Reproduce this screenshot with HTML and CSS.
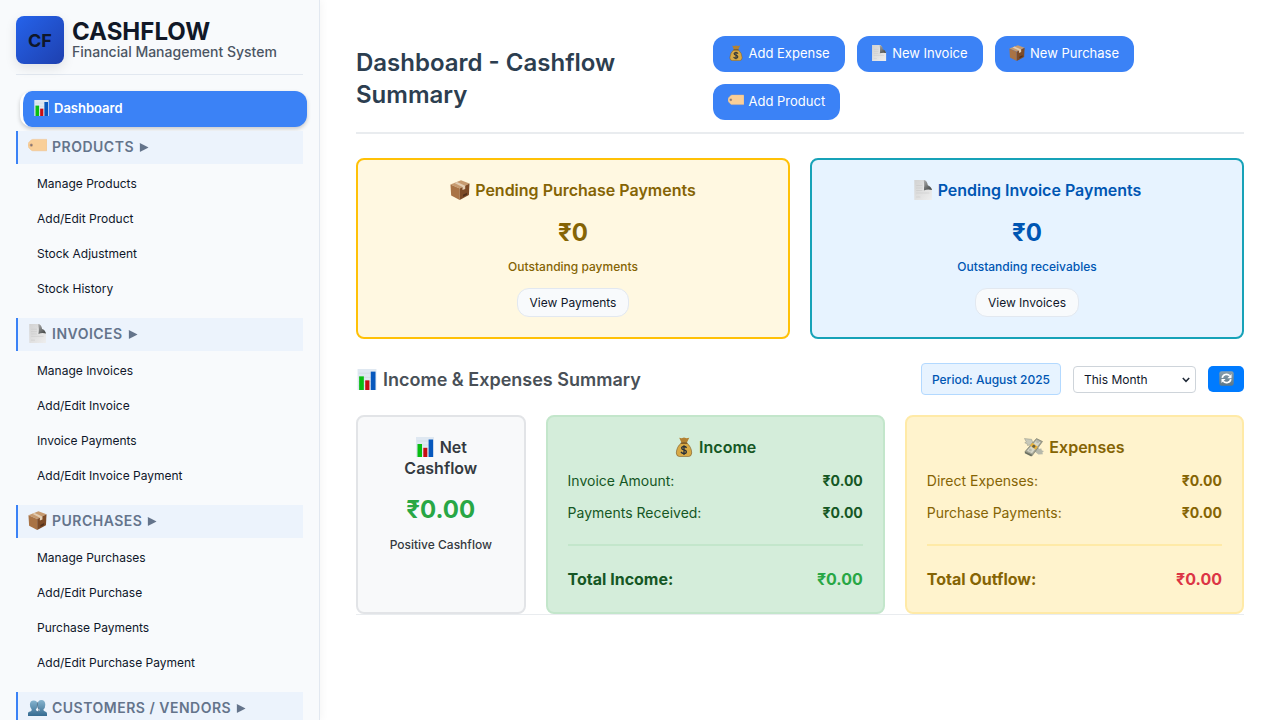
FILE: index.html
```
<!DOCTYPE html>
<html lang="en">
<head>
<meta charset="utf-8">
<title>Cashflow Dashboard</title>
<link rel="stylesheet" href="styles.css">
</head>
<body>
<svg class="defs" width="0" height="0" aria-hidden="true">
  <defs>
    <linearGradient id="gPage" x1="0" y1="0" x2="1" y2="1"><stop offset="0" stop-color="#d2d2d2"/><stop offset="1" stop-color="#eeeeee"/></linearGradient>
    <linearGradient id="gFold" x1="0" y1="0" x2=".7" y2="1"><stop offset="0" stop-color="#b0b0b0"/><stop offset="1" stop-color="#454949"/></linearGradient>
    <linearGradient id="gBlue" x1="0" y1="0" x2="0" y2="1"><stop offset="0" stop-color="#86b4cf"/><stop offset="1" stop-color="#356b91"/></linearGradient>
    <linearGradient id="gSync" x1="0" y1="0" x2="0" y2="1"><stop offset="0" stop-color="#8aa0ae"/><stop offset="1" stop-color="#5c7787"/></linearGradient>
  </defs>
  <symbol id="chart" viewBox="0 0 20 20"><path fill="#dfe8f1" d="M1 0h18v20H1z"/><path stroke="#c3ced9" stroke-width=".4" d="M2 4h16M2 8h16M2 12h16M2 16h16"/><path fill="#09bd12" d="M2.500 7h4.500v13H2.500z"/><path fill="#c80d12" d="M8.300 10.800h4V20h-4z"/><path fill="#0758bd" d="M13.600 2.500h4.500V20h-4.500z"/></symbol>
  <symbol id="tag" viewBox="0 0 20 20"><path fill="#f9cf98" stroke="#edbd83" stroke-width=".5" d="M5 2.500h14.500q.4 0 .4.500v11q0 .5-.5.500H5q-1 0-1.800-.8L.8 11.200Q0 10 0 8.500T.8 5.800l2.400-2.500Q4 2.500 5 2.500z"/><circle cx="3.500" cy="8.500" r="1.700" fill="#b69176"/><circle cx="3.500" cy="8.500" r=".7" fill="#54617c"/></symbol>
  <symbol id="page" viewBox="0 0 20 20"><path fill="url(#gPage)" d="M1.300 0h10.500q2.400 2 2.600 6l4.500 3V20H1.300z"/><path fill="url(#gFold)" d="M10.800 0q3.400.5 4 5.300 3.200.9 4.200 4.800-4-1.200-8.200.3.900-5.400 0-10.400z"/><path fill="#e6e6e6" d="M10.500 2q1 3.500.3 8.400l-1 .3z"/><path stroke="#c4c4c4" stroke-width=".5" d="M3.300 5.500h6M3.300 8h6M3.300 10.500h6M3.300 13h13M3.300 17h4"/></symbol>
  <symbol id="box" viewBox="0 0 20 20"><path fill="#c69a6f" d="M.5 4.500 11 .2l8.500 3.300-9.800 5z"/><path fill="#a97345" d="M.5 4.500 9.700 8.500V20L1.200 15.500z"/><path fill="#7d4b27" d="m9.700 8.500 9.800-5-.6 11.500L9.700 20z"/><path fill="#e3cdb2" d="M4.500 3 7 2l8.200 3.700v3.200L12.500 10V7z"/><path fill="#52301b" d="m13 14.700 4-2v2l-4 2z"/></symbol>
  <symbol id="bag" viewBox="0 0 20 20"><path fill="#b38232" d="m5.200.8 2.500.5L10 .5l2.600.8 2.700-.6-2.500 5H7.500z"/><path fill="#d8aa46" stroke="#795522" stroke-width=".6" d="M7.300 6q2.700-1 5.500 0 4.700 3.800 4.900 10-.3 3.600-3.300 3.600H5.700q-3.200 0-3.400-3.600Q2.700 9.500 7.300 6z"/><path fill="none" stroke="#765020" stroke-width="1.200" d="M6.800 6.200h6.500"/><path fill="none" stroke="#283039" stroke-width="1.300" d="M12.600 10.700Q11.500 9.500 10 9.500c-3.300 0-3 2.900 0 3.400 3.300.6 2.900 3.700 0 3.700-1.600 0-2.600-.9-3-1.700M10 8.300v9.600"/></symbol>
  <symbol id="wings" viewBox="0 0 20 20"><path fill="#c7c8b9" stroke="#84867a" stroke-width=".4" d="m.4 1.500 7.200.8 2 5.200-2.800 2-1-1.500-2.300.5-.5-2L.8 6l1.300-1.500z"/><path fill="#b6b8aa" d="m10 14 3-4 2.700 2 1.500-.8.7 2.300 2.100.6-1.600 1.400.5 1.800-4.500.1z"/><path fill="#a4a596" stroke="#626758" stroke-width=".5" d="m1 14.500 11.500-13 6 3-10.200 14z"/><path fill="#d7d8ca" d="m3 13.700 9.500-10.500 4 2L8 16.200z"/><circle cx="13.600" cy="4.700" r="1.500" fill="#b9bbad"/><circle cx="6.300" cy="13" r="1.500" fill="#b9bbad"/><path fill="#e8b33d" d="m6 8.500 2.400-2.800 5.500 4-2.300 3z"/><circle cx="9.800" cy="9.200" r="1.500" fill="#635f43"/><path fill="#696e61" d="m.8 14.600 7.500 3.500-1 1.400-6.500-3.300z"/></symbol>
  <symbol id="people" viewBox="0 0 20 20"><g fill="url(#gBlue)"><path d="M6 2.500q4 0 4 4.700 0 3.300-1.800 5 .3 1.800 3.300 2.200V19H0v-3.200q.3-1.200 2.200-1.500 1.800-.3 1.700-2.200Q2 10.300 2 7.200q0-4.700 4-4.700z"/><path d="M14 2q4.200 0 4.200 5 0 3.400-2 5.200 0 1.700 1.800 2.100 2 .4 2 2V19H9v-3.200q.3-1.200 2-1.500 1.500-.3 1.300-2.100-2.200-1.900-2.200-5.200 0-5 3.900-5z"/></g><path fill="none" stroke="#33556e" stroke-width=".7" d="M10 4.500q-1 5 1.500 7.500 0 2-1.500 3"/></symbol>
  <symbol id="sync" viewBox="0 0 20 20"><rect x=".4" y=".4" width="19.200" height="19.200" rx="3" fill="url(#gSync)"/><path fill="none" stroke="#fff" stroke-width="2.300" d="M4.300 9.300A5.800 5.800 0 0 1 14.300 6.300M15.700 10.700A5.800 5.800 0 0 1 5.700 13.700"/><path fill="#fff" d="M16.700 4v5.500h-5.500zM3.300 16v-5.500h5.500z"/></symbol>
  <symbol id="arrow" viewBox="0 0 10 10"><path fill="currentColor" d="M.4.600Q.4.200.9.400L9.600 4.600q.5.400 0 .8L.9 9.600Q.4 9.800.4 9.400z"/></symbol>
</svg>
<div class="app">
  <aside class="sidebar">
    <div class="brand">
      <div class="logo">CF</div>
      <div class="brand-copy"><div class="brand-name">CASHFLOW</div><div class="brand-sub">Financial Management System</div></div>
    </div>
    <nav>
      <a class="nav-active"><svg class="ico"><use href="#chart"/></svg>Dashboard</a>
      <section class="group"><h3><svg class="ico"><use href="#tag"/></svg>PRODUCTS<svg class="arrow"><use href="#arrow"/></svg></h3>
        <a>Manage Products</a><a>Add/Edit Product</a><a>Stock Adjustment</a><a>Stock History</a></section>
      <section class="group"><h3><svg class="ico"><use href="#page"/></svg>INVOICES<svg class="arrow"><use href="#arrow"/></svg></h3>
        <a>Manage Invoices</a><a>Add/Edit Invoice</a><a>Invoice Payments</a><a>Add/Edit Invoice Payment</a></section>
      <section class="group"><h3><svg class="ico"><use href="#box"/></svg>PURCHASES<svg class="arrow"><use href="#arrow"/></svg></h3>
        <a>Manage Purchases</a><a>Add/Edit Purchase</a><a>Purchase Payments</a><a>Add/Edit Purchase Payment</a></section>
      <section class="group"><h3><svg class="ico"><use href="#people"/></svg>CUSTOMERS / VENDORS<svg class="arrow"><use href="#arrow"/></svg></h3></section>
    </nav>
  </aside>
  <main class="main">
    <header class="page-head">
      <h1>Dashboard - Cashflow Summary</h1>
      <div class="actions">
        <button class="action"><svg class="ico"><use href="#bag"/></svg>Add Expense</button>
        <button class="action"><svg class="ico"><use href="#page"/></svg>New Invoice</button>
        <button class="action"><svg class="ico"><use href="#box"/></svg>New Purchase</button>
        <button class="action"><svg class="ico"><use href="#tag"/></svg>Add Product</button>
      </div>
    </header>
    <div class="pending">
      <div class="pend-card purchase"><h3><svg class="ico"><use href="#box"/></svg>Pending Purchase Payments</h3><div class="amount">₹0</div><p>Outstanding payments</p><button class="view">View Payments</button></div>
      <div class="pend-card invoice"><h3><svg class="ico"><use href="#page"/></svg>Pending Invoice Payments</h3><div class="amount">₹0</div><p>Outstanding receivables</p><button class="view">View Invoices</button></div>
    </div>
    <div class="summary-head">
      <h2><svg class="ico"><use href="#chart"/></svg>Income &amp; Expenses Summary</h2>
      <div class="filters"><span class="period">Period: August 2025</span><span class="range-wrap"><select class="range"><option>This Month</option></select><svg class="chevron" viewBox="0 0 8 6"><path d="m.8 1 3.200 3.300L7.200 1"/></svg></span><button class="refresh" aria-label="Refresh"><svg><use href="#sync"/></svg></button></div>
    </div>
    <div class="summary">
      <div class="card net"><h3><svg class="ico"><use href="#chart"/></svg>Net Cashflow</h3><div class="amount">₹0.00</div><p>Positive Cashflow</p></div>
      <div class="card income"><h3><svg class="ico"><use href="#bag"/></svg>Income</h3>
        <div class="row"><span>Invoice Amount:</span><b>₹0.00</b></div><div class="row"><span>Payments Received:</span><b>₹0.00</b></div>
        <div class="total"><span>Total Income:</span><span class="value">₹0.00</span></div></div>
      <div class="card expense"><h3><svg class="ico"><use href="#wings"/></svg>Expenses</h3>
        <div class="row"><span>Direct Expenses:</span><b>₹0.00</b></div><div class="row"><span>Purchase Payments:</span><b>₹0.00</b></div>
        <div class="total"><span>Total Outflow:</span><span class="value">₹0.00</span></div></div>
    </div>
  </main>
</div>
</body>
</html>
```
FILE: styles.css
```
* { box-sizing: border-box; }
body { margin: 0; background: #fff; color: #0f172a; font-family: Inter, "Liberation Sans", sans-serif; -webkit-font-smoothing: antialiased; }
h1, h2, h3, p { margin: 0; }
button, select { font-family: inherit; }
.defs { display: block; }
.app { display: flex; height: 720px; overflow: hidden; }
.ico { flex: none; display: inline-block; }

.sidebar { width: 320px; flex: none; padding: 16px; background: #f8fafc; border-right: 1px solid #e2e8f0; box-shadow: 2px 0 8px rgba(0,0,0,.04); overflow: hidden; }
.brand { display: flex; gap: 8px; height: 59px; border-bottom: 1px solid #e2e8f0; }
.logo { width: 48px; height: 48px; flex: none; border-radius: 8px; background: linear-gradient(135deg, #2563eb, #1e40af); color: #0f172a; font-size: 18px; font-weight: 700; line-height: 49px; text-align: center; box-shadow: 0 4px 12px rgba(0,0,0,.1); }
.brand-name { font-size: 24px; font-weight: 700; line-height: 24px; padding-top: 4px; height: 27px; color: #111827; }
.brand-sub { font-size: 14px; font-weight: 500; line-height: 17px; color: #4b5563; }
nav { padding-top: 16px; }
.nav-active { display: flex; align-items: center; width: 287px; height: 36px; margin: 0 0 4px 4px; padding: 0 0 2px 10px; border-left: 3px solid #fff; border-radius: 12px; background: #3b82f6; color: #fff; font-size: 13px; font-weight: 600; box-shadow: 0 2px 4px rgba(0,0,0,.2); }
.nav-active .ico { width: 17px; height: 16px; margin-right: 4px; }
.group { margin-bottom: 12px; }
.group h3 { display: flex; align-items: center; height: 33px; margin-bottom: 2px; padding: 0 0 2px 10px; border-left: 2px solid #3b82f6; background: #ecf3fc; color: #64748b; font-size: 14px; font-weight: 600; letter-spacing: .5px; }
.group h3 .ico { width: 19px; height: 19px; margin: -1px 5px 0 0; }
.arrow { width: 10px; height: 9px; margin: 1px 0 0 5px; overflow: visible; }
.group a { display: block; height: 35px; padding-left: 21px; font-size: 12px; line-height: 36px; }

.main { flex: 1; min-width: 0; padding: 36px; }
.page-head { display: flex; align-items: center; height: 98px; padding-bottom: 12px; border-bottom: 2px solid #e9ecef; }
.page-head h1 { width: 357px; padding: 2px 50px 0 0; flex: none; color: #2c3e50; font-size: 24px; font-weight: 600; line-height: 32px; }
.actions { display: flex; flex-wrap: wrap; gap: 12px; flex: 1; }
.action { display: flex; align-items: center; height: 36px; padding: 0 15px 2px 14.5px; border: 0; border-radius: 12px; background: #3b82f6; color: #fff; font-size: 13px; }
.action .ico { width: 16px; height: 16px; margin-right: 5px; }

.pending { display: grid; grid-template-columns: 1fr 1fr; gap: 20px; margin-top: 24px; }
.pend-card { height: 181px; padding: 20px 18px 18px; border: 2px solid; border-radius: 8px; text-align: center; }
.pend-card h3, .card h3 { font-size: 16px; font-weight: 600; line-height: 21px; }
.pend-card .ico, .card .ico { width: 20px; height: 20px; margin-right: 5px; vertical-align: -4px; }
.purchase { background: #fff8e1; border-color: #ffc107; color: #856404; }
.invoice { background: #e7f3ff; border-color: #17a2b8; color: #0056b3; }
.amount { font-size: 24px; font-weight: 700; line-height: 30px; }
.pend-card .amount { margin-top: 17px; }
.pend-card p { margin-top: 11px; font-size: 12px; font-weight: 500; line-height: 15px; }
.view { height: 29px; margin-top: 14px; padding: 0 12px; border: 1px solid #e2e8f0; border-radius: 12px; background: #f8fafc; color: #0f172a; font-size: 12px; }

.summary-head { display: flex; justify-content: space-between; align-items: center; height: 32px; margin: 24px 0 20px; }
.summary-head h2 { display: flex; align-items: center; color: #495057; font-size: 18px; font-weight: 600; }
.summary-head h2 .ico { width: 22px; height: 21px; margin-right: 5px; }
.filters { display: flex; align-items: center; gap: 12px; }
.period { height: 32px; padding: 0 10px; border: 1px solid #b3d9ff; border-radius: 4px; background: #e7f3ff; color: #0056b3; font-size: 12px; font-weight: 500; line-height: 31px; }
.range-wrap { position: relative; display: flex; }
.range { appearance: none; width: 123px; height: 27px; padding: 0 10px; border: 1px solid #ced4da; border-radius: 4px; background: #fff; color: #0f172a; font-size: 12px; }
.chevron { position: absolute; right: 6px; top: 11px; width: 8px; height: 6px; fill: none; stroke: #1f2937; stroke-width: 1.5; pointer-events: none; }
.refresh { display: flex; align-items: center; justify-content: center; width: 36px; height: 26px; padding: 0 0 2px; border: 0; border-radius: 5px; background: #007bff; }
.refresh svg { width: 15px; height: 15px; }

.summary { display: grid; grid-template-columns: 1fr 2fr 2fr; gap: 20px; border-bottom: 1px solid #e9ecef; }
.card { height: 199px; padding: 20px; border: 2px solid; border-radius: 8px; }
.card h3 { text-align: center; }
.net { background: #f8f9fa; border-color: #e2e4e7; color: #343a40; text-align: center; }
.net .amount { margin-top: 16px; color: #28a745; }
.net p { margin-top: 12px; font-size: 12px; font-weight: 500; line-height: 15px; }
.income { background: #d4edda; border-color: #c3e6cb; color: #155724; }
.expense { background: #fff3cd; border-color: #ffeaa7; color: #856404; }
.row { display: flex; justify-content: space-between; margin-bottom: 12px; font-size: 14px; line-height: 20px; }
.card h3 + .row { margin-top: 13px; }
.total { display: flex; justify-content: space-between; margin-top: 21px; padding-top: 23px; border-top: 2px solid; border-color: inherit; font-size: 16px; font-weight: 700; line-height: 20px; }
.income .value { color: #28a745; }
.expense .value { color: #dc3545; }
```
